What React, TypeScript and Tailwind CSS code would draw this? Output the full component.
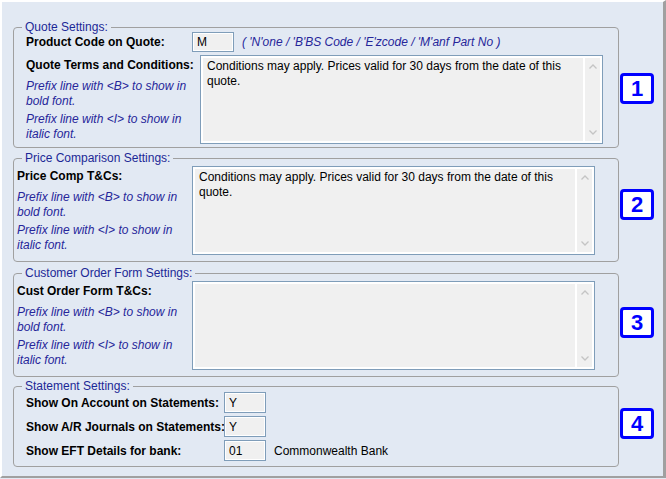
import type { ReactNode } from "react";

function Chevron({ up }: { up?: boolean }) {
  return (
    <svg width="8" height="5" viewBox="0 0 8 5" className="block">
      <polyline
        points={up ? "0.5,4.5 4,1 7.5,4.5" : "0.5,0.5 4,4 7.5,0.5"}
        fill="none"
        stroke="#c4c4c4"
        strokeWidth="1.3"
      />
    </svg>
  );
}

function Memo({ lines }: { lines?: string[] }) {
  return (
    <div className="flex h-[89px] w-[403px] shrink-0 border border-[#7f9db9] bg-[#f0f0f0] p-[2px] shadow-[inset_0_0_0_2px_#ffffff]">
      <div className="flex-1 pl-[4px] pt-[1px] text-[12px] leading-[15px] text-black">
        {lines?.map((l) => (
          <div key={l} className="whitespace-nowrap">
            {l}
          </div>
        ))}
      </div>
      <div className="flex w-[17px] flex-col items-center justify-between border-l-2 border-white py-[6px]">
        <Chevron up />
        <Chevron />
      </div>
    </div>
  );
}

function Field({ value }: { value: string }) {
  return (
    <div className="flex h-[21px] w-[42px] shrink-0 items-center border border-[#7f9db9] bg-[#f0f0f0] pl-[4px] text-[12px] text-black shadow-[inset_0_0_0_1px_#ffffff]">
      {value}
    </div>
  );
}

function Hints() {
  return (
    <div className="mt-[6px] text-[12px] italic leading-[15px] text-[#26269a]">
      <p className="whitespace-nowrap">Prefix line with &lt;B&gt; to show in</p>
      <p>bold font.</p>
      <p className="mt-[3px] whitespace-nowrap">Prefix line with &lt;I&gt; to show in</p>
      <p>italic font.</p>
    </div>
  );
}

function Group({ title, className, children }: { title: string; className: string; children: ReactNode }) {
  return (
    <div className={`relative w-[606px] shrink-0 rounded-[4px] border border-[#a0a0a0] ${className}`}>
      <span className="absolute -top-[8px] left-[8px] whitespace-nowrap bg-[#e2e9f3] px-[3px] text-[12px] leading-[14px] text-[#1c2896]">
        {title}
      </span>
      {children}
    </div>
  );
}

function Badge({ n, className }: { n: string; className: string }) {
  return (
    <div
      className={`ml-[1px] flex h-[31px] w-[34px] shrink-0 items-center justify-center rounded-[4px] border-[3px] border-[#0000ff] bg-white text-[22px] font-bold leading-none text-[#0000ff] ${className}`}
    >
      {n}
    </div>
  );
}

const terms = ["Conditions may apply. Prices valid for 30 days from the date of this", "quote."];

export default function App() {
  return (
    <div className="h-[479px] w-[666px] bg-[#e2e9f3] pb-px font-['Liberation_Sans',Arial,sans-serif]">
      <div className="h-full border-b-2 border-l-2 border-r-[3px] border-t-2 border-b-[#a0a0a0] border-l-white border-r-[#a0a0a0] border-t-white pl-[11px] pt-[25px]">
        {/* Quote settings */}
        <div className="flex items-start">
          <Group title="Quote Settings:" className="h-[121px]">
            <div className="pl-[12px] pt-[4px]">
              <div className="flex h-[20px] items-center">
                <span className="w-[166px] text-[12px] font-bold text-black">Product Code on Quote:</span>
                <div className="flex h-[20px] w-[42px] shrink-0 items-center border border-[#7f9db9] bg-[#f0f0f0] pl-[4px] text-[12px] text-black shadow-[inset_0_0_0_1px_#ffffff]">
                  M
                </div>
                <span className="ml-[8px] whitespace-nowrap text-[12px] italic text-[#26269a]">
                  ( 'N'one / 'B'BS Code / 'E'zcode / 'M'anf Part No )
                </span>
              </div>
              <div className="mt-[3px] flex">
                <div className="w-[174px] shrink-0">
                  <div className="mt-[3px] text-[12px] font-bold leading-[15px] text-black">Quote Terms and Conditions:</div>
                  <Hints />
                </div>
                <Memo lines={terms} />
              </div>
            </div>
          </Group>
          <Badge n="1" className="mt-[46px]" />
        </div>

        {/* Price comparison */}
        <div className="mt-[10px] flex items-start">
          <Group title="Price Comparison Settings:" className="h-[104px]">
            <div className="flex pl-[3px] pt-[7px]">
              <div className="w-[175px] shrink-0">
                <div className="mt-[3px] text-[12px] font-bold leading-[15px] text-black">Price Comp T&amp;Cs:</div>
                <Hints />
              </div>
              <Memo lines={terms} />
            </div>
          </Group>
          <Badge n="2" className="mt-[31px]" />
        </div>

        {/* Customer order form */}
        <div className="mt-[11px] flex items-start">
          <Group title="Customer Order Form Settings:" className="h-[104px]">
            <div className="flex pl-[3px] pt-[7px]">
              <div className="w-[175px] shrink-0">
                <div className="mt-[3px] text-[12px] font-bold leading-[15px] text-black">Cust Order Form T&amp;Cs:</div>
                <Hints />
              </div>
              <Memo />
            </div>
          </Group>
          <Badge n="3" className="mt-[34px]" />
        </div>

        {/* Statement settings */}
        <div className="mt-[9px] flex items-start">
          <Group title="Statement Settings:" className="h-[81px]">
            <div className="flex flex-col gap-[3px] pl-[12px] pt-[5px] text-[12px] text-black">
              <div className="flex items-center">
                <span className="w-[198px] shrink-0 whitespace-nowrap font-bold">Show On Account on Statements:</span>
                <Field value="Y" />
              </div>
              <div className="flex items-center">
                <span className="w-[198px] shrink-0 whitespace-nowrap font-bold">Show A/R Journals on Statements:</span>
                <Field value="Y" />
              </div>
              <div className="flex items-center">
                <span className="w-[198px] shrink-0 whitespace-nowrap font-bold">Show EFT Details for bank:</span>
                <Field value="01" />
                <span className="ml-[8px]">Commonwealth Bank</span>
              </div>
            </div>
          </Group>
          <Badge n="4" className="mt-[22px]" />
        </div>
      </div>
    </div>
  );
}
